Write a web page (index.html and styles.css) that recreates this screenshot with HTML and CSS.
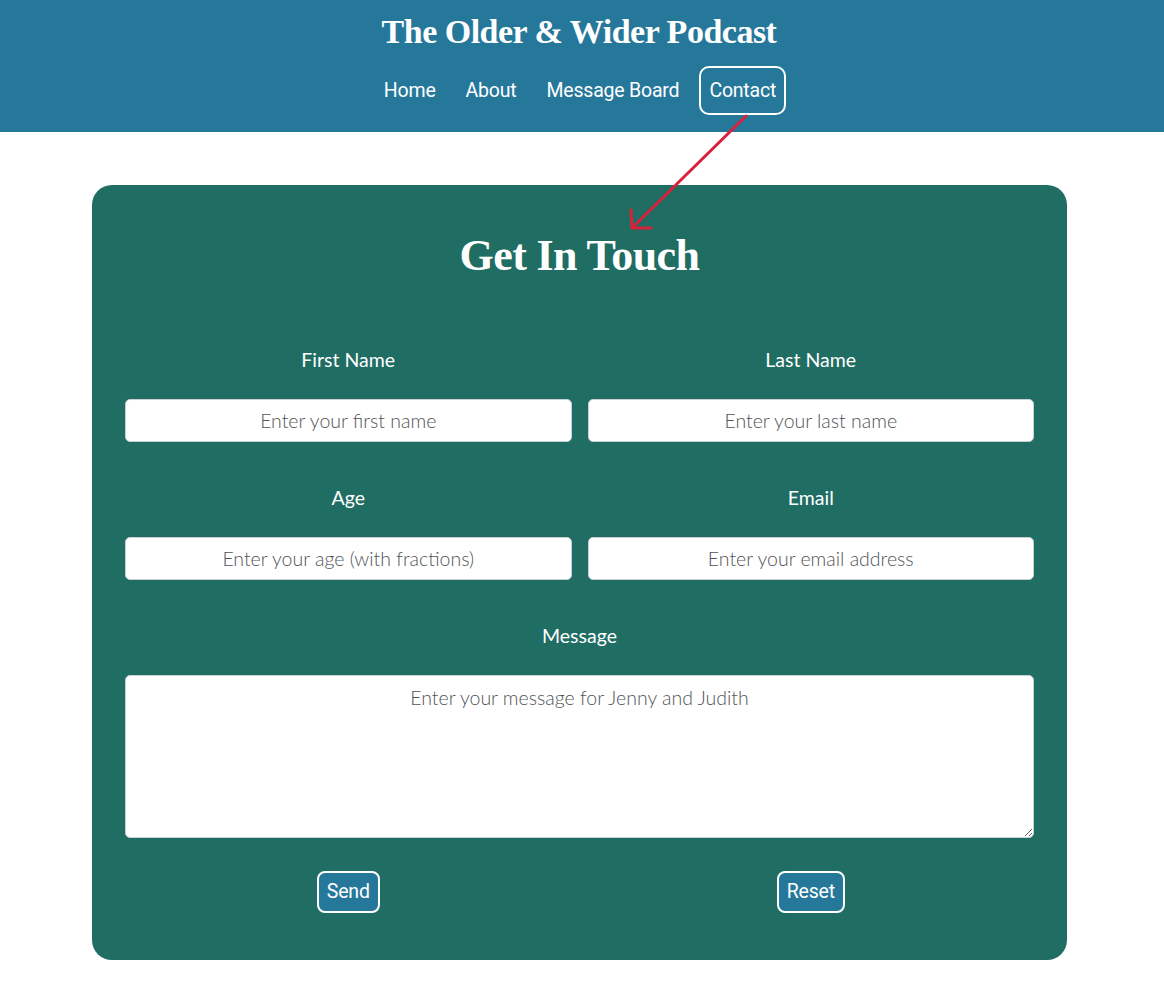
FILE: index.html
```html
<!DOCTYPE html>
<html lang="en">
<head>
<meta charset="utf-8">
<title>Contact - The Older &amp; Wider Podcast</title>
<link rel="stylesheet" href="styles.css">
</head>
<body>
<header class="site-header">
  <h1 class="site-title">The Older &amp; Wider Podcast</h1>
  <nav class="nav">
    <a class="nav-link" href="#">Home</a>
    <a class="nav-link" href="#">About</a>
    <a class="nav-link" href="#">Message Board</a>
    <a class="nav-link active" href="#">Contact</a>
  </nav>
</header>
<main class="main">
  <section class="card">
    <h2 class="card-title">Get In Touch</h2>
    <form class="form">
      <div class="field">
        <label class="label" for="fn">First Name</label>
        <input class="input" id="fn" type="text" placeholder="Enter your first name">
      </div>
      <div class="field">
        <label class="label" for="ln">Last Name</label>
        <input class="input" id="ln" type="text" placeholder="Enter your last name">
      </div>
      <div class="field">
        <label class="label" for="age">Age</label>
        <input class="input" id="age" type="text" placeholder="Enter your age (with fractions)">
      </div>
      <div class="field">
        <label class="label" for="em">Email</label>
        <input class="input" id="em" type="text" placeholder="Enter your email address">
      </div>
      <div class="field full">
        <label class="label" for="msg">Message</label>
        <textarea class="textarea" id="msg" placeholder="Enter your message for Jenny and Judith"></textarea>
      </div>
      <div class="actions">
        <button class="btn" type="button">Send</button>
        <button class="btn" type="reset">Reset</button>
      </div>
    </form>
  </section>
</main>
<svg class="arrow" width="1164" height="260" viewBox="0 0 1164 260">
  <line x1="746" y1="116" x2="633" y2="227" stroke="#d9213b" stroke-width="3" stroke-linecap="round"/>
  <polyline points="631,210 632,228 651,228" fill="none" stroke="#d9213b" stroke-width="3" stroke-linecap="round" stroke-linejoin="round"/>
</svg>
</body>
</html>
```
FILE: styles.css
```css
html, body {
  margin: 0;
  padding: 0;
  background: #ffffff;
}
body {
  font-family: Lato, "Noto Sans", sans-serif;
  position: relative;
  padding-right: 5px;
}
.site-header {
  background: #26789b;
  padding: 12px 0 17px;
  display: flex;
  flex-direction: column;
  align-items: center;
  margin-right: -5px;
}
.site-title {
  margin: 0;
  font-family: "Liberation Serif", serif;
  font-weight: bold;
  font-size: 34px;
  line-height: 40px;
  color: #ffffff;
  letter-spacing: -0.5px;
  transform: translateX(-3px);
}
.nav {
  display: flex;
  gap: 10px;
  margin-top: 14px;
  transform: translateX(-2px);
}
.nav-link {
  font-family: Roboto, "Noto Sans", sans-serif;
  font-size: 19.5px;
  line-height: 25px;
  color: #ffffff;
  text-decoration: none;
  padding: 10px 8px;
  border: 2px solid transparent;
  border-radius: 10px;
  letter-spacing: -0.2px;
}
.nav-link.active {
  border-color: #ffffff;
}
.main {
  padding: 53px 0 40px;
}
.card {
  width: 975px;
  box-sizing: border-box;
  margin: 0 auto;
  background: #206d63;
  border-radius: 20px;
  padding: 33px 33px 47px;
  color: #ffffff;
}
.card-title {
  margin: 10px 0 64px;
  text-align: center;
  font-family: "Liberation Serif", serif;
  font-weight: bold;
  font-size: 44px;
  line-height: 56px;
  letter-spacing: -0.6px;
}
.form {
  display: grid;
  grid-template-columns: 1fr 1fr;
  column-gap: 16px;
  row-gap: 44px;
}
.field {
  display: flex;
  flex-direction: column;
}
.field.full {
  grid-column: 1 / -1;
}
.label {
  text-align: center;
  font-size: 19.5px;
  line-height: 24px;
  margin-bottom: 27px;
}
.input, .textarea {
  box-sizing: border-box;
  width: 100%;
  border: 1px solid #c9cfd2;
  border-radius: 5px;
  background: #ffffff;
  font-family: Lato, "Noto Sans", sans-serif;
  font-weight: 300;
  font-size: 19.5px;
  text-align: center;
  color: #333;
  margin: 0;
}
.input {
  height: 43px;
  padding: 0 10px;
}
.textarea {
  height: 163px;
  padding: 10px;
  resize: vertical;
  display: block;
}
.input::placeholder, .textarea::placeholder {
  color: #4f5458;
}
.actions {
  grid-column: 1 / -1;
  display: grid;
  grid-template-columns: 1fr 1fr;
  column-gap: 16px;
  justify-items: center;
  margin-top: -11px;
}
.btn {
  font-family: Roboto, "Noto Sans", sans-serif;
  font-size: 19.5px;
  line-height: 24px;
  color: #ffffff;
  background: #26789b;
  border: 2px solid #ffffff;
  border-radius: 8px;
  padding: 7px 8px;
  cursor: pointer;
  letter-spacing: -0.2px;
}
.arrow {
  position: absolute;
  top: 0;
  left: 0;
  pointer-events: none;
}
```
